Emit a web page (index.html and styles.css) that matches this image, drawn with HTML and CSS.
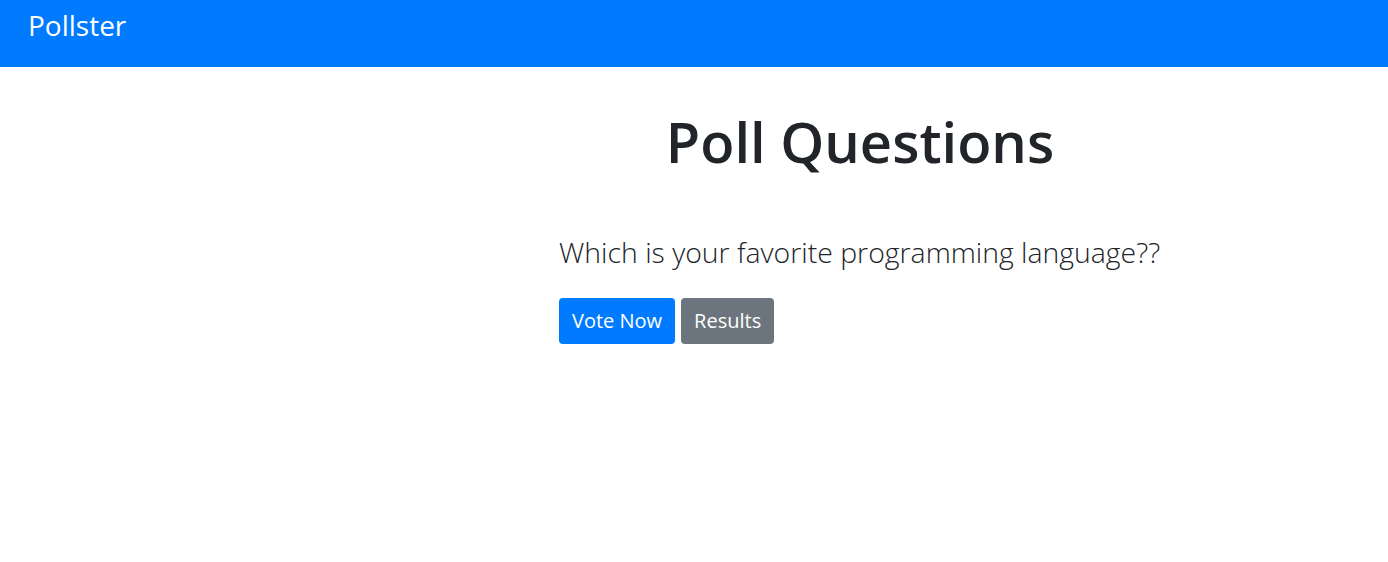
FILE: index.html
```html
<!DOCTYPE html>
<html lang="en">
<head>
<meta charset="utf-8">
<title>Pollster</title>
<link rel="stylesheet" href="styles.css">
</head>
<body>
<nav class="navbar">
  <a class="brand" href="#">Pollster</a>
</nav>
<main class="main">
  <section class="content">
    <h1 class="title">Poll Questions</h1>
    <p class="question">Which is your favorite programming language??</p>
    <div class="actions">
      <a class="btn btn-primary" href="#">Vote Now</a>
      <a class="btn btn-secondary" href="#">Results</a>
    </div>
  </section>
</main>
</body>
</html>
```

FILE: styles.css
```css
* { box-sizing: border-box; }
html, body { margin: 0; padding: 0; }
body {
  font-family: "Open Sans", "Noto Sans", sans-serif;
  color: #212529;
  background: #fff;
}
.navbar {
  height: 67px;
  background: #007bff;
  display: flex;
  align-items: center;
  padding: 0 28px;
}
.brand {
  color: #fff;
  text-decoration: none;
  font-size: 28px;
  line-height: 1;
  margin-top: -18px;
}
.main {
  display: flex;
}
.content {
  margin-left: 559px;
  width: 602px;
}
.title {
  text-align: center;
  font-size: 56px;
  font-weight: 600;
  line-height: 1.2;
  margin: 41px 0 0;
}
.question {
  font-size: 28.4px;
  font-weight: 300;
  margin: 56px 0 0;
  line-height: 1.5;
}
.actions {
  display: flex;
  gap: 6px;
  margin-top: 24px;
}
.btn {
  display: inline-flex;
  align-items: center;
  height: 46px;
  padding: 0 13px;
  font-size: 20px;
  color: #fff;
  text-decoration: none;
  border-radius: 4px;
}
.btn-primary { background: #007bff; }
.btn-secondary { background: #6c757d; }
```
